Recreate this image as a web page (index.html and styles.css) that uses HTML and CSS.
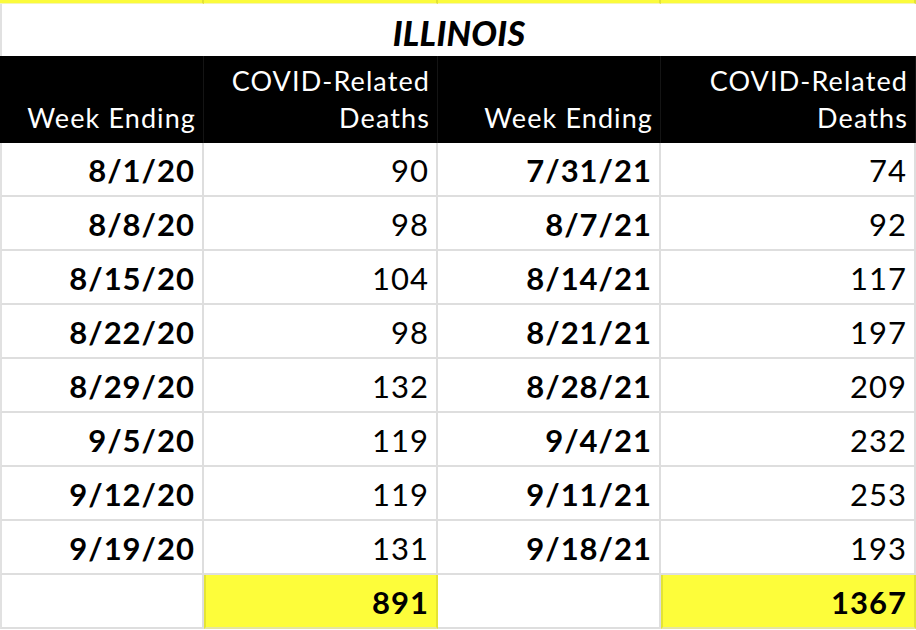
FILE: index.html
```html
<!DOCTYPE html>
<html lang="en">
<head>
<meta charset="utf-8">
<title>Illinois COVID-Related Deaths</title>
<link rel="stylesheet" href="styles.css">
</head>
<body>
<div class="sheet">
  <div class="strip"></div><div class="strip"></div><div class="strip"></div><div class="strip"></div>
  <div class="title">ILLINOIS</div>
  <div class="hd"><span>Week Ending</span></div>
  <div class="hd"><span>COVID-Related</span><span>Deaths</span></div>
  <div class="hd"><span>Week Ending</span></div>
  <div class="hd"><span>COVID-Related</span><span>Deaths</span></div>

  <div class="c date first">8/1/20</div><div class="c">90</div><div class="c date">7/31/21</div><div class="c">74</div>
  <div class="c date first">8/8/20</div><div class="c">98</div><div class="c date">8/7/21</div><div class="c">92</div>
  <div class="c date first">8/15/20</div><div class="c">104</div><div class="c date">8/14/21</div><div class="c">117</div>
  <div class="c date first">8/22/20</div><div class="c">98</div><div class="c date">8/21/21</div><div class="c">197</div>
  <div class="c date first">8/29/20</div><div class="c">132</div><div class="c date">8/28/21</div><div class="c">209</div>
  <div class="c date first">9/5/20</div><div class="c">119</div><div class="c date">9/4/21</div><div class="c">232</div>
  <div class="c date first">9/12/20</div><div class="c">119</div><div class="c date">9/11/21</div><div class="c">253</div>
  <div class="c date first">9/19/20</div><div class="c">131</div><div class="c date">9/18/21</div><div class="c">193</div>

  <div class="c first"></div><div class="c total">891</div><div class="c"></div><div class="c total">1367</div>
</div>
</body>
</html>
```
FILE: styles.css
```css
* { box-sizing: border-box; }
html, body { margin: 0; padding: 0; background: #fff; }
body { width: 916px; height: 630px; overflow: hidden; font-family: "Lato", "Open Sans", sans-serif; color: #000; }

.sheet {
  display: grid;
  grid-template-columns: 204px 234px 223px 255px;
  grid-template-rows: 4px 52px 87px repeat(9, 54px);
}

.strip {
  background: #fbfb3c;
  border-right: 2px solid #e2e235;
  border-bottom: 1px solid #f4f4b8;
}

.title {
  grid-column: 1 / -1;
  border-left: 2px solid #e1e1e1;
  display: flex;
  align-items: center;
  justify-content: center;
  font-weight: 900;
  font-style: italic;
  font-size: 34px;
  letter-spacing: 0.3px;
  padding-top: 4px;
}

.hd {
  background: #000;
  color: #fff;
  display: flex;
  flex-direction: column;
  justify-content: flex-end;
  align-items: flex-end;
  padding: 0 7px 7px 0;
  font-size: 27px;
  line-height: 37px;
  letter-spacing: 1.1px;
  border-right: 1px solid #141414;
}

.c {
  display: flex;
  align-items: center;
  justify-content: flex-end;
  padding: 2px 7px 0 0;
  border-right: 2px solid #dedede;
  border-bottom: 2px solid #dedede;
  font-size: 31px;
  letter-spacing: 1px;
}
.c.first { border-left: 2px solid #e1e1e1; }
.date { font-weight: 700; }
.total {
  background: #fdfd3a;
  font-weight: 700;
  border-left: 2px solid #e4e433;
  border-right-color: #e4e433;
  border-bottom-color: #e4e4a0;
}
```
